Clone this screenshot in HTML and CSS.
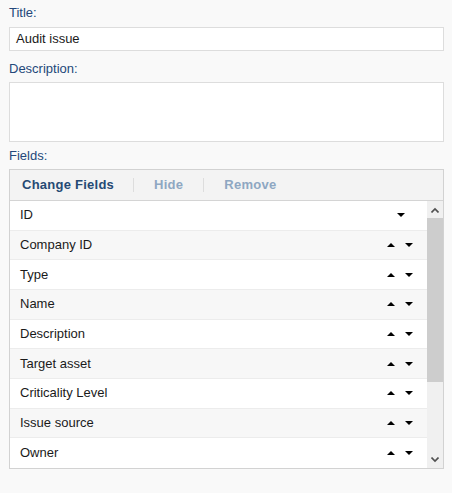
FILE: index.html
```html
<!DOCTYPE html>
<html>
<head>
<meta charset="utf-8">
<link rel="stylesheet" href="styles.css">
</head>
<body>
<div class="form">
  <div class="label label-first">Title:</div>
  <div class="input">Audit issue</div>
  <div class="label label-desc">Description:</div>
  <div class="textarea"></div>
  <div class="label label-fields">Fields:</div>
  <div class="panel">
    <div class="toolbar">
      <span class="tool tool-active">Change Fields</span>
      <span class="sep"></span>
      <span class="tool tool-disabled">Hide</span>
      <span class="sep"></span>
      <span class="tool tool-disabled">Remove</span>
    </div>
    <div class="body">
      <div class="list">
        <div class="row"><span class="name">ID</span><span class="arrows arrows-id"><span class="down"></span></span></div>
        <div class="row alt"><span class="name">Company ID</span><span class="arrows"><span class="up"></span><span class="down"></span></span></div>
        <div class="row"><span class="name">Type</span><span class="arrows"><span class="up"></span><span class="down"></span></span></div>
        <div class="row alt"><span class="name">Name</span><span class="arrows"><span class="up"></span><span class="down"></span></span></div>
        <div class="row"><span class="name">Description</span><span class="arrows"><span class="up"></span><span class="down"></span></span></div>
        <div class="row alt"><span class="name">Target asset</span><span class="arrows"><span class="up"></span><span class="down"></span></span></div>
        <div class="row"><span class="name">Criticality Level</span><span class="arrows"><span class="up"></span><span class="down"></span></span></div>
        <div class="row alt"><span class="name">Issue source</span><span class="arrows"><span class="up"></span><span class="down"></span></span></div>
        <div class="row last"><span class="name">Owner</span><span class="arrows"><span class="up"></span><span class="down"></span></span></div>
      </div>
      <div class="scrollbar">
        <div class="sb-btn">
          <svg width="8" height="6" viewBox="0 0 8 6"><path d="M0.5 5.5 L4 2 L7.5 5.5" fill="none" stroke="#505050" stroke-width="1.6"/></svg>
        </div>
        <div class="sb-track"><div class="sb-thumb"></div></div>
        <div class="sb-btn sb-btn-down">
          <svg width="8" height="6" viewBox="0 0 8 6"><path d="M0.5 0.5 L4 4 L7.5 0.5" fill="none" stroke="#505050" stroke-width="1.6"/></svg>
        </div>
      </div>
    </div>
  </div>
</div>
</body>
</html>
```
FILE: styles.css
```css
html, body {
  margin: 0;
  padding: 0;
  background: #f9f9f9;
}
body {
  font-family: "Liberation Sans", Arial, sans-serif;
  font-size: 13px;
  color: #1a1a1a;
}
.form {
  padding: 5px 8px 0 9px;
  display: flex;
  flex-direction: column;
}
.label {
  line-height: 16px;
  height: 16px;
  color: #24487a;
  margin-bottom: 6px;
}
.label-desc {
  margin-top: 10px;
  margin-bottom: 5px;
}
.label-fields {
  margin-top: 6px;
  margin-bottom: 5px;
}
.input {
  height: 22px;
  line-height: 22px;
  border: 1px solid #dddddd;
  background: #fff;
  padding: 0 6px;
}
.textarea {
  height: 58px;
  border: 1px solid #dddddd;
  background: #fff;
}
.panel {
  border: 1px solid #d2d2d2;
  background: #fff;
  display: flex;
  flex-direction: column;
}
.toolbar {
  height: 30px;
  background: #f3f3f3;
  border-bottom: 1px solid #d4d4d4;
  display: flex;
  align-items: center;
  padding-left: 12px;
}
.tool {
  font-weight: bold;
  line-height: 16px;
  letter-spacing: 0.25px;
}
.tool-active {
  color: #254a74;
  margin-right: 19px;
}
.tool-disabled {
  color: #8ea7c2;
  margin: 0 20px 0 20px;
}
.sep {
  width: 1px;
  height: 14px;
  background: #dddddd;
}
.body {
  display: flex;
  height: 267px;
}
.list {
  flex: 1;
  overflow: hidden;
}
.row {
  height: 28.67px;
  border-bottom: 1px solid #ececec;
  display: flex;
  align-items: center;
  padding-left: 10px;
  background: #fff;
}
.row.alt {
  background: #f7f7f7;
}
.row.last {
  border-bottom: none;
}
.name {
  flex: 1;
  line-height: 16px;
}
.arrows {
  display: flex;
  align-items: center;
  gap: 10px;
  margin-right: 14px;
}
.arrows-id {
  margin-right: 22px;
}
.up {
  width: 0;
  height: 0;
  border-left: 4px solid transparent;
  border-right: 4px solid transparent;
  border-bottom: 4px solid #000;
}
.down {
  width: 0;
  height: 0;
  border-left: 4px solid transparent;
  border-right: 4px solid transparent;
  border-top: 4px solid #000;
}
.scrollbar {
  width: 16px;
  background: #f0f0f0;
  display: flex;
  flex-direction: column;
}
.sb-btn {
  height: 17px;
  display: flex;
  align-items: center;
  justify-content: center;
}
.sb-btn-down {
  height: 17px;
}
.sb-track {
  flex: 1;
  display: flex;
  flex-direction: column;
}
.sb-thumb {
  height: 164px;
  background: #cdcdcd;
}
```
